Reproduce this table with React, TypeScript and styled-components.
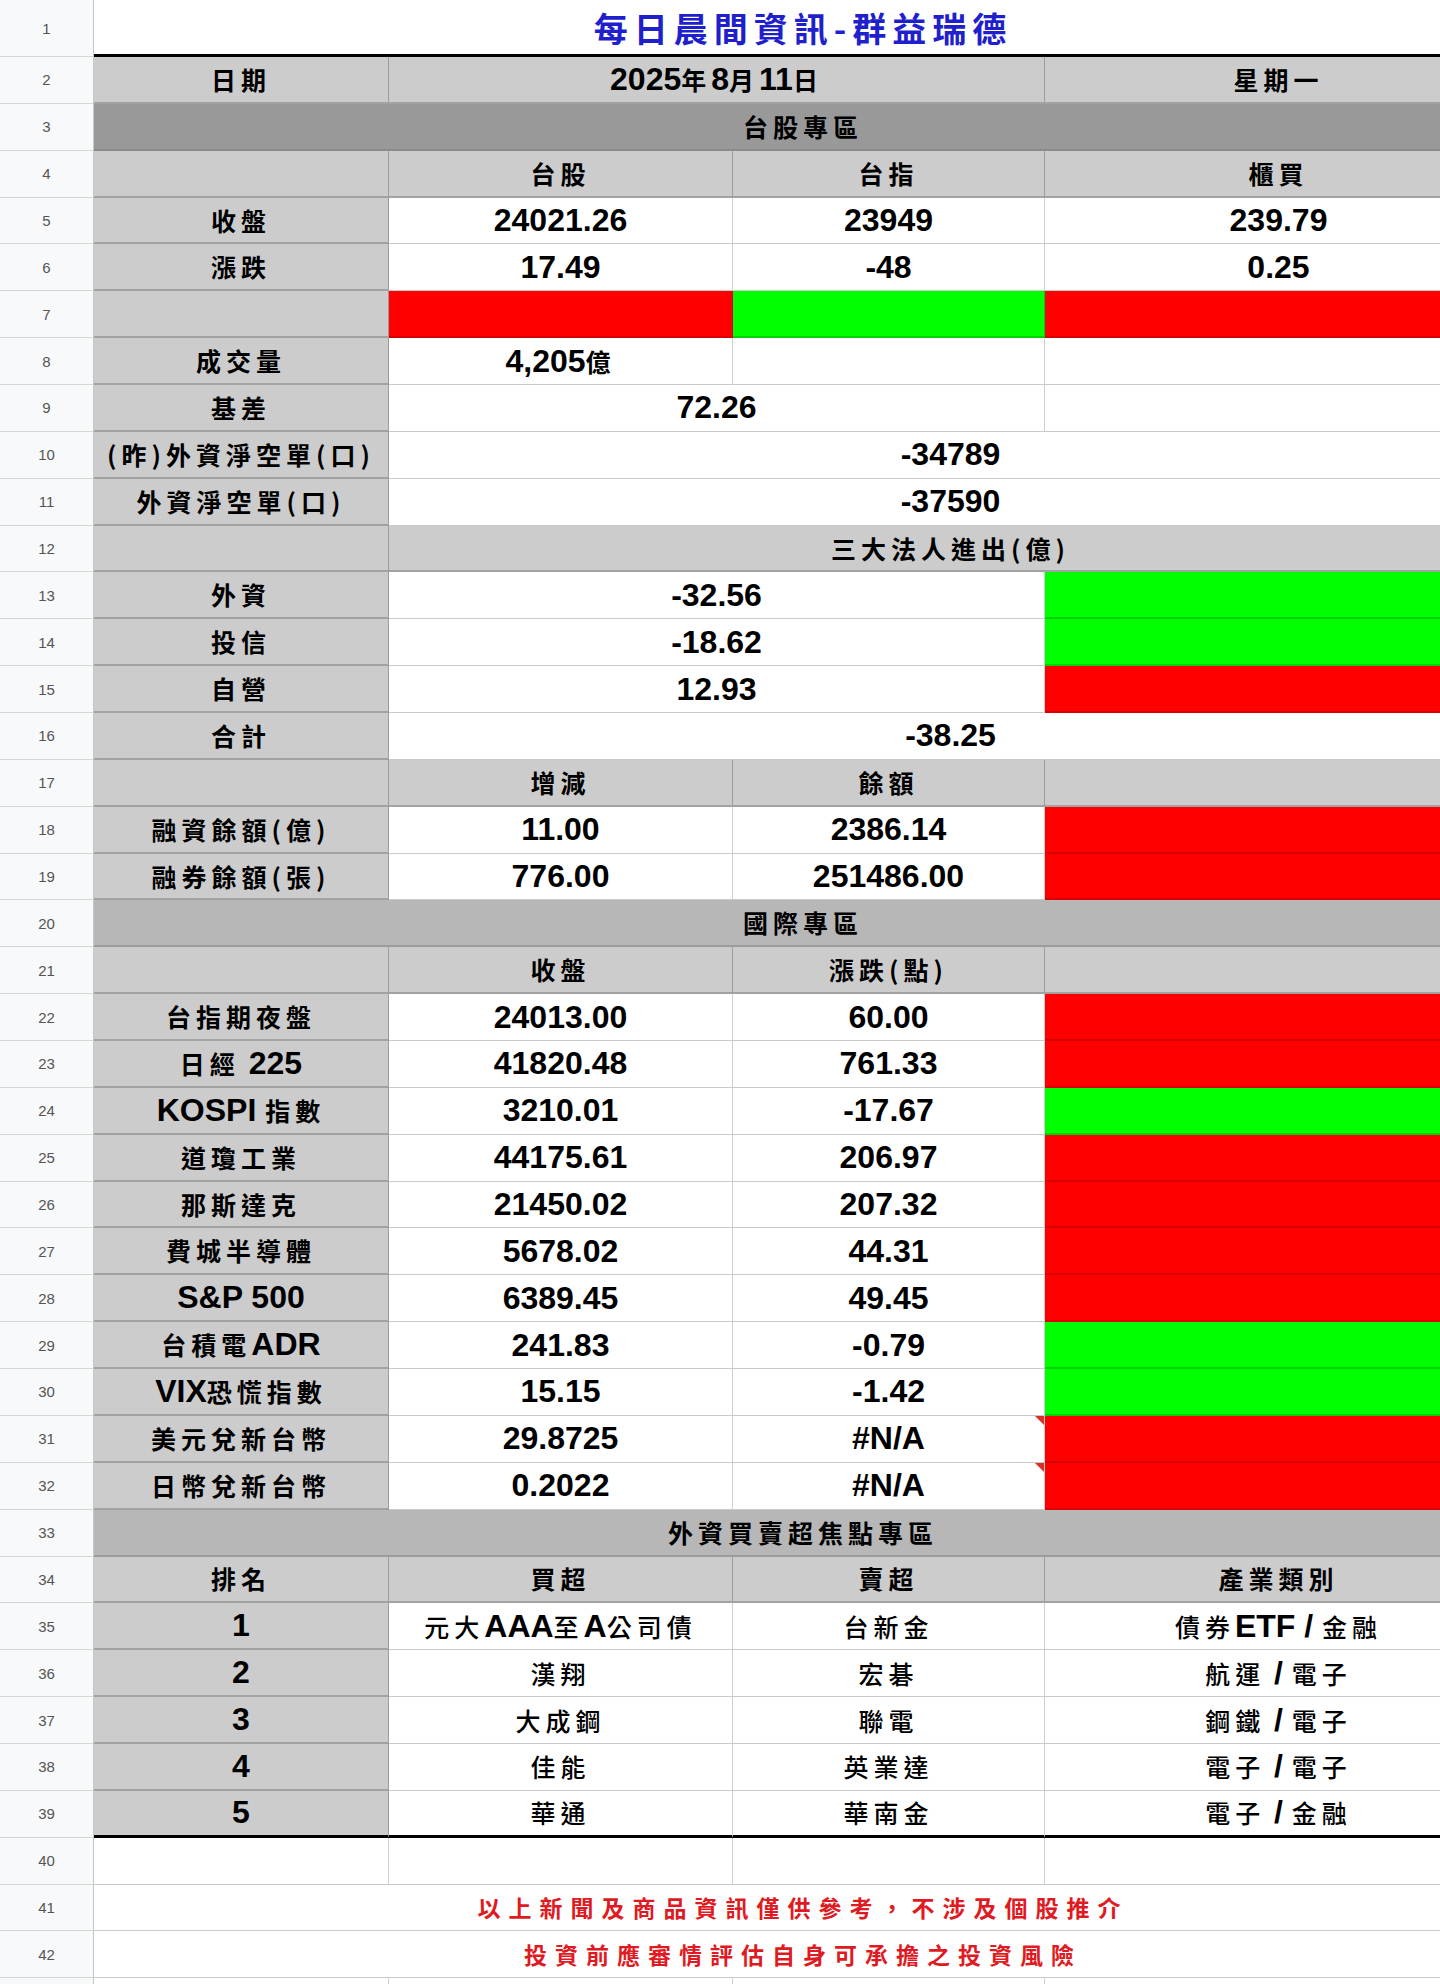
import * as React from 'react'
import styled, { createGlobalStyle, css } from 'styled-components'

const GlobalStyle = createGlobalStyle`
    html, body {
        margin: 0;
        padding: 0;
        background: #ffffff;
    }
    body {
        font-family: "Liberation Sans", Arial, "Noto Sans CJK TC", sans-serif;
        overflow: hidden;
    }
`

type Tone = 'white' | 'label' | 'dark' | 'mid' | 'red' | 'green'

const tones: Record<Tone, { bg: string; line: string; bottom: string }> = {
    white: { bg: '#ffffff', line: '#cfcfcf', bottom: '1px solid #cacaca' },
    label: { bg: '#cccccc', line: '#9c9c9c', bottom: '2px solid #a2a2a2' },
    dark: { bg: '#999999', line: '#888888', bottom: '2px solid #8a8a8a' },
    mid: { bg: '#b7b7b7', line: '#9a9a9a', bottom: '2px solid #9c9c9c' },
    red: { bg: '#ff0000', line: '#d60000', bottom: '2px solid #d80000' },
    green: { bg: '#00ff00', line: '#00d000', bottom: '2px solid #00d400' },
}

const Frame = styled.div`
    width: 1440px;
    height: 1984px;
    overflow: hidden;
`

const Sheet = styled.div`
    display: grid;
    grid-template-columns: 94px 295px 344px 312px 468px;
    grid-template-rows: 57px repeat(41, 46.86px) 40px;
    width: 1513px;
`

const RowNum = styled.div`
    display: flex;
    align-items: center;
    justify-content: center;
    background: #f8f9fa;
    border-right: 1px solid #c4c7c5;
    border-bottom: 1px solid #d4d6d5;
    box-sizing: border-box;
    font-family: "Liberation Sans", Arial, sans-serif;
    font-size: 15px;
    color: #555555;
`

const Cell = styled.div<{ $span?: number; $tone?: Tone; $thick?: boolean; $err?: boolean; $thin?: boolean }>`
    position: relative;
    grid-column: span ${p => p.$span ?? 1};
    display: flex;
    align-items: center;
    justify-content: center;
    box-sizing: border-box;
    min-width: 0;
    white-space: pre;
    background: ${p => tones[p.$tone ?? 'white'].bg};
    border-right: 1px solid ${p => tones[p.$tone ?? 'white'].line};
    border-bottom: ${p => (p.$thick ? '3px solid #000000' : tones[p.$tone ?? 'white'].bottom)};
    font-size: 32px;
    font-weight: 700;
    color: #000000;
    ${p => p.$thin && css`
        span span { font-weight: 500; }
    `}
    ${p => p.$err && css`
        &::after {
            content: '';
            position: absolute;
            top: 0;
            right: 0;
            border-top: 9px solid #d93025;
            border-left: 9px solid transparent;
        }
    `}
`

const Line = styled.span`
    display: inline-block;
`

const Zh = styled.span`
    font-family: "Noto Sans CJK TC", "Noto Sans CJK JP", sans-serif;
    font-size: 25px;
    font-weight: 700;
    letter-spacing: 5px;
`

const Title = styled.span`
    font-family: "Noto Sans CJK TC", sans-serif;
    font-size: 34px;
    font-weight: 700;
    letter-spacing: 6px;
    color: #1f1fcc;
`

const Notice = styled.span`
    font-family: "Noto Sans CJK TC", sans-serif;
    font-size: 23px;
    font-weight: 700;
    letter-spacing: 8px;
    color: #e01a22;
`

const Txt = ({ s }: { s: string }) => (
    <Line>
        {s.split(/([\u3000-\u9fff\uff00-\uffef()]+)/).filter(Boolean).map((part, i) =>
            /[\u3000-\u9fff\uff00-\uffef]/.test(part) ? <Zh key={i}>{part}</Zh> : <React.Fragment key={i}>{part}</React.Fragment>
        )}
    </Line>
)

const markets: [string, string, string, Tone, boolean?][] = [
    ['台指期夜盤', '24013.00', '60.00', 'red'],
    ['日經 225', '41820.48', '761.33', 'red'],
    ['KOSPI 指數', '3210.01', '-17.67', 'green'],
    ['道瓊工業', '44175.61', '206.97', 'red'],
    ['那斯達克', '21450.02', '207.32', 'red'],
    ['費城半導體', '5678.02', '44.31', 'red'],
    ['S&P 500', '6389.45', '49.45', 'red'],
    ['台積電ADR', '241.83', '-0.79', 'green'],
    ['VIX恐慌指數', '15.15', '-1.42', 'green'],
    ['美元兌新台幣', '29.8725', '#N/A', 'red', true],
    ['日幣兌新台幣', '0.2022', '#N/A', 'red', true],
]

const focus: [string, string, string, string][] = [
    ['1', '元大AAA至A公司債', '台新金', '債券ETF / 金融'],
    ['2', '漢翔', '宏碁', '航運 / 電子'],
    ['3', '大成鋼', '聯電', '鋼鐵 / 電子'],
    ['4', '佳能', '英業達', '電子 / 電子'],
    ['5', '華通', '華南金', '電子 / 金融'],
]

export default function App() {
    let n = 0
    const num = () => <RowNum>{++n}</RowNum>

    return (
        <Frame>
            <GlobalStyle />
            <Sheet>
                {num()}
                <Cell $span={4} $thick><Title>每日晨間資訊-群益瑞德</Title></Cell>

                {num()}
                <Cell $tone="label"><Txt s="日期" /></Cell>
                <Cell $tone="label" $span={2}><Txt s="2025年8月11日" /></Cell>
                <Cell $tone="label"><Txt s="星期一" /></Cell>

                {num()}
                <Cell $tone="dark" $span={4}><Txt s="台股專區" /></Cell>

                {num()}
                <Cell $tone="label" />
                <Cell $tone="label"><Txt s="台股" /></Cell>
                <Cell $tone="label"><Txt s="台指" /></Cell>
                <Cell $tone="label"><Txt s="櫃買" /></Cell>

                {num()}
                <Cell $tone="label"><Txt s="收盤" /></Cell>
                <Cell>24021.26</Cell>
                <Cell>23949</Cell>
                <Cell>239.79</Cell>

                {num()}
                <Cell $tone="label"><Txt s="漲跌" /></Cell>
                <Cell>17.49</Cell>
                <Cell>-48</Cell>
                <Cell>0.25</Cell>

                {num()}
                <Cell $tone="label" />
                <Cell $tone="red" />
                <Cell $tone="green" />
                <Cell $tone="red" />

                {num()}
                <Cell $tone="label"><Txt s="成交量" /></Cell>
                <Cell><Txt s="4,205億" /></Cell>
                <Cell />
                <Cell />

                {num()}
                <Cell $tone="label"><Txt s="基差" /></Cell>
                <Cell $span={2}>72.26</Cell>
                <Cell />

                {num()}
                <Cell $tone="label"><Txt s="(昨)外資淨空單(口)" /></Cell>
                <Cell $span={3}>-34789</Cell>

                {num()}
                <Cell $tone="label"><Txt s="外資淨空單(口)" /></Cell>
                <Cell $span={3}>-37590</Cell>

                {num()}
                <Cell $tone="label" />
                <Cell $tone="label" $span={3}><Txt s="三大法人進出(億)" /></Cell>

                {num()}
                <Cell $tone="label"><Txt s="外資" /></Cell>
                <Cell $span={2}>-32.56</Cell>
                <Cell $tone="green" />

                {num()}
                <Cell $tone="label"><Txt s="投信" /></Cell>
                <Cell $span={2}>-18.62</Cell>
                <Cell $tone="green" />

                {num()}
                <Cell $tone="label"><Txt s="自營" /></Cell>
                <Cell $span={2}>12.93</Cell>
                <Cell $tone="red" />

                {num()}
                <Cell $tone="label"><Txt s="合計" /></Cell>
                <Cell $span={3}>-38.25</Cell>

                {num()}
                <Cell $tone="label" />
                <Cell $tone="label"><Txt s="增減" /></Cell>
                <Cell $tone="label"><Txt s="餘額" /></Cell>
                <Cell $tone="label" />

                {num()}
                <Cell $tone="label"><Txt s="融資餘額(億)" /></Cell>
                <Cell>11.00</Cell>
                <Cell>2386.14</Cell>
                <Cell $tone="red" />

                {num()}
                <Cell $tone="label"><Txt s="融券餘額(張)" /></Cell>
                <Cell>776.00</Cell>
                <Cell>251486.00</Cell>
                <Cell $tone="red" />

                {num()}
                <Cell $tone="mid" $span={4}><Txt s="國際專區" /></Cell>

                {num()}
                <Cell $tone="label" />
                <Cell $tone="label"><Txt s="收盤" /></Cell>
                <Cell $tone="label"><Txt s="漲跌(點)" /></Cell>
                <Cell $tone="label" />

                {markets.map(([name, close, diff, tone, err]) => (
                    <React.Fragment key={name}>
                        {num()}
                        <Cell $tone="label"><Txt s={name} /></Cell>
                        <Cell>{close}</Cell>
                        <Cell $err={err}>{diff}</Cell>
                        <Cell $tone={tone} />
                    </React.Fragment>
                ))}

                {num()}
                <Cell $tone="mid" $span={4}><Txt s="外資買賣超焦點專區" /></Cell>

                {num()}
                <Cell $tone="label"><Txt s="排名" /></Cell>
                <Cell $tone="label"><Txt s="買超" /></Cell>
                <Cell $tone="label"><Txt s="賣超" /></Cell>
                <Cell $tone="label"><Txt s="產業類別" /></Cell>

                {focus.map(([rank, buy, sell, sector], i) => (
                    <React.Fragment key={rank}>
                        {num()}
                        <Cell $tone="label" $thick={i === 4}>{rank}</Cell>
                        <Cell $thin $thick={i === 4}><Txt s={buy} /></Cell>
                        <Cell $thin $thick={i === 4}><Txt s={sell} /></Cell>
                        <Cell $thin $thick={i === 4}><Txt s={sector} /></Cell>
                    </React.Fragment>
                ))}

                {num()}
                <Cell />
                <Cell />
                <Cell />
                <Cell />

                {num()}
                <Cell $span={4}><Notice>以上新聞及商品資訊僅供參考，不涉及個股推介</Notice></Cell>

                {num()}
                <Cell $span={4}><Notice>投資前應審情評估自身可承擔之投資風險</Notice></Cell>

                <RowNum />
                <Cell />
                <Cell />
                <Cell />
                <Cell />
            </Sheet>
        </Frame>
    )
}
